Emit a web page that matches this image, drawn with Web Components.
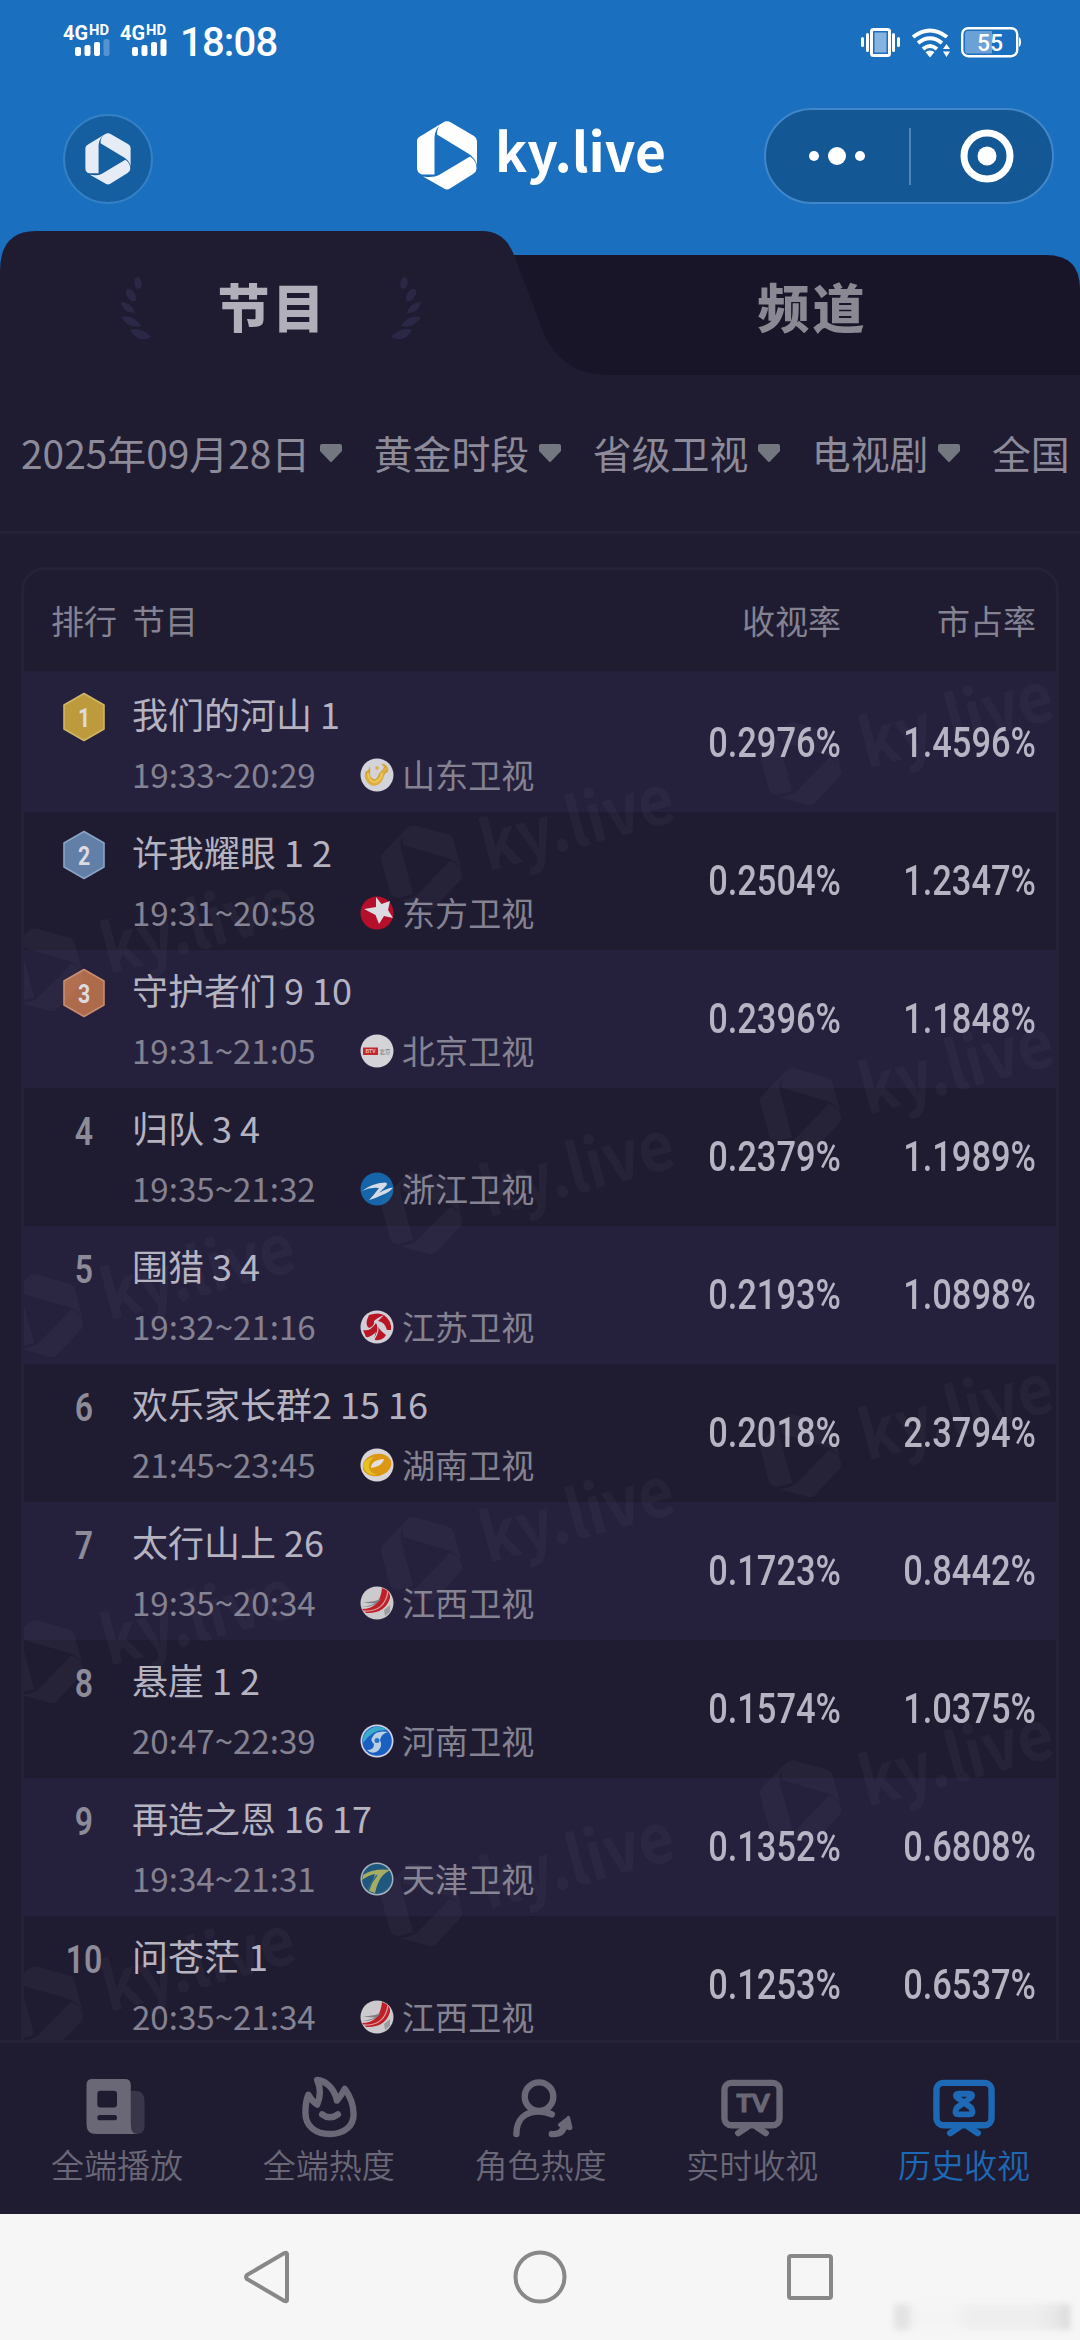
<!DOCTYPE html>
<html lang="zh-CN">
<head>
<meta charset="utf-8">
<title>ky.live</title>
<style>
  html, body {
    margin: 0;
    padding: 0;
  }
  body {
    width: 1080px;
    height: 2340px;
    overflow: hidden;
    background: #1f1c32;
    font-family: "Noto Sans CJK SC", sans-serif;
  }
</style>
</head>
<body>
<ky-app></ky-app>

<script>
const BRAND_MARK = `
  <path d="M0 20 Q0 17 3 15.500 L21 4.500 Q24 2.500 26 2 Q18 7 17.500 16 L17.500 53.500 L5 53.500 Q0 52 0 47 Z"/>
  <path d="M20 13.500 Q20 5 26 1.500 Q30 -1 34 1.500 L57 15 Q60 17 60 20 L60 44 Q58 37 52 33 Z"/>
  <path d="M53 35.500 Q60 40 59.500 48 Q59.300 51 56 53 L33 67.500 Q30 69.500 27 67.500 L6 55.500 Q17 57 22 54 Z"/>`;

const CHANNEL_ICONS = {
  shandong: `<circle cx="17" cy="17" r="16.500" fill="#d3d3da"/>
    <path d="M5 14 C6 25 11 29 16 27 C25 25 22 15 28 14 C29 8 24 5 21 6 C28 10 20 12 18 18 C17 23 10 22 10 15 Q11 10 9 8 Q10 12 5 14Z" fill="#d6a22c"/>
    <path d="M6 17 Q8 26 15 26 Q21 24 22 17 Q23 12 28 10" fill="none" stroke="#dcae43" stroke-width="3.500"/>
    <path d="M8 15 Q9 24 15 24 Q21 22 22 15" fill="none" stroke="#ecc85c" stroke-width="2"/>
    <circle cx="17" cy="10" r="1.800" fill="#dcae43"/>`,
  dongfang: `<circle cx="17" cy="17" r="16.500" fill="#b50f2b"/>
    <path d="M16 1 L21.500 8 L30 5 L28 14 L33 22 L24 20 L19 28 L15.500 19 L4 13 L16 11Z" fill="#dddbe2"/>`,
  beijing: `<circle cx="17" cy="17" r="16.500" fill="#d4d3d8"/>
    <rect x="3" y="13.500" width="15" height="7.500" fill="#c5262c"/>
    <text x="10.500" y="19.300" font-size="5" font-weight="bold" text-anchor="middle" fill="#e9c4c6" font-family="Liberation Sans, sans-serif">BTV</text>
    <text x="25" y="19.600" font-size="5.500" text-anchor="middle" fill="#66656d" font-family="Noto Sans CJK SC, sans-serif">北京</text>`,
  zhejiang: `<circle cx="17" cy="17" r="16.500" fill="#1565a8"/>
    <path d="M2 19 Q12 11 25 10.500 Q29 11 25 15 L19 21 Q27 16 33 15.500 Q30 20 22 23 Q14 27 9 28 Q14 23 19 16 Q10 15 2 19Z" fill="#d5dbe7"/>`,
  jiangsu: `<circle cx="17" cy="17" r="16.500" fill="#d2ced6"/>
    <path d="M9 5 Q18 2 24 5 Q17 8 14 11 Q15 16 9 18 Q4 15 9 5Z M24 5 Q32 11 31 20 L27 20 Q25 12 18 11Z M3 20 Q10 22 16 13 Q19 20 26 25 Q23 31 15 30 Q14 27 16 22 Q10 28 6 27Z" fill="#b81624"/>
    <path d="M17 12 Q20 21 14 29 M17 12 Q22 16 27 22" stroke="#d2ced6" stroke-width="1.300" fill="none"/>`,
  hunan: `<circle cx="17" cy="17" r="16.500" fill="#d8d5d8"/>
    <ellipse cx="17" cy="17" rx="14.500" ry="11" transform="rotate(-14 17 17)" fill="#dc9713"/>
    <path d="M3 18 Q6 28 17 27 Q10 25 9 20 Q8 14 14 9 Q4 11 3 18Z" fill="#e4c320"/>
    <path d="M11 20 Q11 12 24 11 Q23 18 11 20Z" fill="#e4dfdc"/>`,
  jiangxi: `<circle cx="17" cy="17" r="16.500" fill="#cccacd"/>
    <path d="M22 2 Q31 5 30 12 Q25 28 6 27 L2 23 Q20 23 22 2Z" fill="#bf2028"/>
    <path d="M4 25 Q25 26 28 5" stroke="#dc9c9f" stroke-width="1.300" fill="none"/>
    <path d="M3 16 Q12 17 21 13 Q14 22 2 21 Q10 20 15 17 Q8 18 3 16Z" fill="#7d8086"/>
    <path d="M24 24 L30 19 L30 26 L25 30Z" fill="#9b9da2"/>`,
  henan: `<circle cx="17" cy="17" r="16.500" fill="#d0d2e4"/>
    <circle cx="17" cy="17" r="14.800" fill="#1a5fc2"/>
    <path d="M3 19 A14.800 14.800 0 0 1 27 6 Q12 5 3 19Z" fill="#39aacb"/>
    <path d="M12 14 Q15 6 28 8 Q21 10 20 16 Q23 22 18 27 Q12 31 7 26 Q14 26 14 20 Q10 16 12 14Z" fill="#b6cfe2"/>
    <circle cx="17" cy="16.500" r="2.500" fill="#2672c6"/>`,
  tianjin: `<circle cx="17" cy="17" r="16.500" fill="#a4b3bc"/>
    <circle cx="17" cy="17" r="15" fill="#20577f"/>
    <path d="M3 13 Q14 6 31 8 Q19 12 15 31 L9 29 Q13 19 15 12 Q9 13 2 18Z" fill="#a6ac62"/>
    <path d="M17 13 Q11 20 8 28" stroke="#2d6a87" stroke-width="1.500" fill="none"/>`
};

const NAV_ICONS = {
  play: `<path d="M47 14 H51 Q61 14 61 24 V50 Q61 58 52 58 H46Z" opacity=".35"/>
    <path fill-rule="evenodd" d="M8 2 H41 Q47 2 47 8 V48 Q47 58 54 58 H12 Q2 58 2 48 V8 Q2 2 8 2Z M16 14 Q13 14 13 17 V28 Q13 31 16 31 H30 Q33 31 33 28 V17 Q33 14 30 14Z M15.500 38.500 Q13 38.500 13 41.300 Q13 44 15.500 44 H30.500 Q33 44 33 41.300 Q33 38.500 30.500 38.500Z"/>`,
  fire: `<g fill="none" stroke="currentColor" stroke-width="6.500" stroke-linejoin="round" stroke-linecap="round">
      <path d="M21 3 C31 4 39 13 41 24 Q46 18 49 12 C55 20 58 29 58 38 C58 50 48 58 34 58 C19 58 9 50 9 36 C9 29 10 23 12 18 Q16 25 21 28 C25 19 24 10 21 3Z"/>
      <path d="M26 38 Q34 44 42 38"/>
    </g>`,
  role: `<g fill="none" stroke="currentColor" stroke-width="6.500" stroke-linejoin="round" stroke-linecap="round">
      <circle cx="32" cy="20" r="14.500"/>
      <path d="M9 58 C9 43 18 35 32 35 Q39 35 45 38 M45 58 Q56 59 58 49"/>
    </g>
    <path d="M60 41 Q62 38 63.500 41 L66 51 Q66 54 63 54 L53 51 Q50 49 52 47Z"/>`,
  tv: `<g fill="none" stroke="currentColor" stroke-width="6.500" stroke-linejoin="round" stroke-linecap="round">
      <rect x="5" y="6" width="56" height="43" rx="7"/>
      <path d="M19 57 L28 51 M47 57 L38 51"/>
    </g>
    <text x="34" y="35.500" font-size="25" font-weight="900" text-anchor="middle" textLength="34" lengthAdjust="spacingAndGlyphs" stroke="currentColor" stroke-width=".8" font-family="Lato, Inter, sans-serif">TV</text>`,
  history: `<g fill="none" stroke="currentColor" stroke-width="6.500" stroke-linejoin="round" stroke-linecap="round">
      <rect x="5" y="6" width="56" height="43" rx="7"/>
      <path d="M19 57 L28 51 M47 57 L38 51"/>
      <path stroke-width="6" d="M28 17 H38 Q43 17 40 21 L26 31 Q22 38 28 38 H38 Q44 38 40 31 L26 21 Q23 17 28 17Z"/>
    </g>`
};

const PROGRAMS = [
  ['我们的河山 1', '19:33~20:29', 'shandong', '山东卫视', '0.2976%', '1.4596%'],
  ['许我耀眼 1 2', '19:31~20:58', 'dongfang', '东方卫视', '0.2504%', '1.2347%'],
  ['守护者们 9 10', '19:31~21:05', 'beijing', '北京卫视', '0.2396%', '1.1848%'],
  ['归队 3 4', '19:35~21:32', 'zhejiang', '浙江卫视', '0.2379%', '1.1989%'],
  ['围猎 3 4', '19:32~21:16', 'jiangsu', '江苏卫视', '0.2193%', '1.0898%'],
  ['欢乐家长群2 15 16', '21:45~23:45', 'hunan', '湖南卫视', '0.2018%', '2.3794%'],
  ['太行山上 26', '19:35~20:34', 'jiangxi', '江西卫视', '0.1723%', '0.8442%'],
  ['悬崖 1 2', '20:47~22:39', 'henan', '河南卫视', '0.1574%', '1.0375%'],
  ['再造之恩 16 17', '19:34~21:31', 'tianjin', '天津卫视', '0.1352%', '0.6808%'],
  ['问苍茫 1', '20:35~21:34', 'jiangxi', '江西卫视', '0.1253%', '0.6537%']
];

// Small base class: each element only supplies its markup.
class KyElement extends HTMLElement {
  connectedCallback() {
    if (this.shadowRoot) return;
    this.attachShadow({ mode: 'open' });
    this.shadowRoot.innerHTML = this.render();
  }
}

class StatusBar extends KyElement {
  signal(last) {
    return `<svg width="47" height="34" viewBox="0 0 47 34" fill="#fff">
      <text x="0" y="15.500" font-size="20" font-weight="700" textLength="25" lengthAdjust="spacingAndGlyphs">4G</text>
      <text x="26" y="10.500" font-size="14" font-weight="700" textLength="20" lengthAdjust="spacingAndGlyphs">HD</text>
      <rect x="12" y="23" width="6" height="9" rx="2"/>
      <rect x="21.500" y="21" width="6" height="11" rx="2"/>
      <rect x="31" y="18" width="6" height="14" rx="2"/>
      <rect x="40.500" y="15" width="6" height="17" rx="2" opacity="${last}"/>
    </svg>`;
  }

  render() {
    return `
      <style>
        :host {
          display: flex;
          justify-content: space-between;
          height: 84px;
          padding: 24px 59px 0 63px;
          box-sizing: border-box;
          color: #fff;
          font-family: Roboto, sans-serif;
        }
        .side { display: flex; align-items: flex-start; gap: 10px; }
        .time { margin: -5px 0 0 3px; font-size: 40px; font-weight: 500; line-height: 48px; letter-spacing: -0.800px; }
        svg { display: block; overflow: visible; }
      </style>
      <div class="side">${this.signal(0.25)}${this.signal(1)}<span class="time">18:08</span></div>
      <div class="side">
        <svg width="40" height="36" viewBox="0 0 40 36" fill="#fff">
          <rect x="10.500" y="5.500" width="18" height="26" rx="2" fill="#1a6fbf" stroke="#fff" stroke-width="3"/>
          <rect x="13.500" y="8.500" width="12" height="20" fill="#86b3df"/>
          <rect x="5" y="9" width="3" height="19" rx="1.500"/><rect x="0" y="13" width="3" height="10" rx="1.500"/>
          <rect x="31" y="9" width="3" height="19" rx="1.500"/><rect x="36" y="13" width="3" height="10" rx="1.500"/>
        </svg>
        <svg width="40" height="36" viewBox="0 0 40 36" fill="none" stroke="#fff" stroke-width="4">
          <path d="M2 13 Q19 0 36 13"/><path d="M7 19 Q19 9.500 31 19"/><path d="M12 25 Q19 19 26 25"/>
          <path d="M14.500 28 Q19 25 23.500 28 L19 33.500Z M32 25 L35.500 20 L39 25Z M32 27.500 L35.500 33 L39 27.500Z" fill="#fff" stroke="none"/>
        </svg>
        <svg width="60" height="36" viewBox="0 0 60 36">
          <rect x="1.200" y="4.200" width="55" height="28" rx="6" fill="none" stroke="#fff" stroke-width="2.400"/>
          <path d="M31 7 V29.500 H7 Q4 29.500 4 26.500 V10 Q4 7 7 7Z" fill="#6ca1d8"/>
          <path d="M58 13 Q60 14 60 18 Q60 22 58 23Z" fill="#fff"/>
          <text x="29" y="26.500" font-size="23" font-weight="500" text-anchor="middle" fill="#fff">55</text>
        </svg>
      </div>`;
  }
}

class BrandMark extends KyElement {
  render() {
    return `
      <style>
        :host { display: block; width: 60px; height: 69px; }
        svg { display: block; width: 100%; height: 100%; fill: currentColor; }
      </style>
      <svg viewBox="0 0 60 69">${BRAND_MARK}</svg>`;
  }
}

class AppHeader extends KyElement {
  render() {
    return `
      <style>
        :host {
          display: grid;
          grid-template-columns: 1fr auto 1fr;
          align-items: center;
          height: 147px;
          padding: 24px 26px 27px 63px;
          box-sizing: border-box;
          color: #fff;
        }
        .avatar {
          display: flex;
          align-items: center;
          justify-content: center;
          width: 86px;
          height: 86px;
          margin-top: 6px;
          border: 2px solid #3480c5;
          border-radius: 50%;
          background: #155e9f;
        }
        .avatar ky-mark { width: 46px; height: 52px; color: #e5ecf6; }
        .brand { width: 249px; height: 96px; margin-left: -37px; overflow: visible; }
        .capsule {
          display: flex;
          align-items: center;
          justify-self: end;
          width: 286px;
          height: 92px;
          border: 2px solid #4186c8;
          border-radius: 48px;
          background: #145795;
        }
        .dots { display: flex; flex: 1; align-items: center; justify-content: center; gap: 9px; padding-right: 1px; }
        i { width: 10px; height: 10px; border-radius: 50%; background: #fff; }
        i.big { width: 18px; height: 18px; }
        .line { width: 2px; height: 57px; background: #4c86bb; }
        .target { display: flex; width: 141px; justify-content: center; padding-left: 2px; box-sizing: border-box; }
        .target svg { margin-left: 8px; }
      </style>
      <div class="avatar"><ky-mark></ky-mark></div>
      <svg class="brand" viewBox="0 0 249 96" fill="#fff">
        <g transform="translate(1 13)">${BRAND_MARK}</g>
        <text x="79" y="64" font-size="54" font-weight="700" font-family="Noto Sans CJK SC, sans-serif" textLength="171" lengthAdjust="spacingAndGlyphs">ky.live</text>
      </svg>
      <div class="capsule">
        <div class="dots"><i></i><i class="big"></i><i></i></div>
        <div class="line"></div>
        <div class="target">
          <svg width="54" height="54" viewBox="0 0 54 54"><circle cx="27" cy="27" r="23" fill="none" stroke="#fff" stroke-width="7"/><circle cx="27" cy="27" r="9.500" fill="#fff"/></svg>
        </div>
      </div>`;
  }
}

class TabStrip extends KyElement {
  laurel(flip) {
    return `<svg width="32" height="66" viewBox="0 0 32 66" fill="#2b2845" style="transform: scaleX(${flip})">
      <ellipse cx="17" cy="7" rx="3.500" ry="6" transform="rotate(-12 17 7)"/>
      <ellipse cx="10" cy="19" rx="4" ry="7" transform="rotate(-35 10 19)"/>
      <path d="M0 26 Q12 27 14 37 Q2 37 0 26Z"/>
      <path d="M0 41 Q13 38 20 50 Q7 53 0 41Z"/>
      <path d="M9 54 Q20 50 30 61 Q17 68 9 54Z"/>
    </svg>`;
  }

  render() {
    return `
      <style>
        :host { display: grid; position: relative; height: 144px; grid-template-columns: 1fr 1fr; background: #1a6fbf; }
        .shape { position: absolute; inset: 0; }
        .tab {
          display: flex;
          position: relative;
          align-items: flex-start;
          justify-content: center;
          padding: 38px 0 0 2px;
          gap: 64px;
          color: #8a8893;
          font-size: 52px;
          font-weight: 900;
          line-height: 74px;
          letter-spacing: 3px;
        }
        .tab span { margin-right: -3px; }
        .tab.on { color: #b1afb9; }
        .tab svg { margin-top: 7px; }
      </style>
      <svg class="shape" width="1080" height="144" viewBox="0 0 1080 144">
        <path d="M480 24 H1046 Q1080 24 1080 58 V144 H480Z" fill="#181529"/>
        <path d="M0 144 V40 Q0 0 36 0 H482 Q505 0 514 24 L537 84 C548 122 570 144 608 144Z" fill="#1f1c32"/>
      </svg>
      <div class="tab on">${this.laurel(1)}<span>节目</span>${this.laurel(-1)}</div>
      <div class="tab"><span>频道</span></div>`;
  }
}

class FilterItem extends KyElement {
  render() {
    return `
      <style>
        :host { display: flex; flex: none; align-items: center; gap: 10px; }
        svg { display: block; margin-top: 2px; }
      </style>
      <slot></slot>
      <svg width="22" height="20" viewBox="0 0 22 20"><path d="M2 1 H20 Q22 1 22 3 V8 L12 18.500 Q11 19.500 10 18.500 L0 8 V3 Q0 1 2 1Z" fill="#727780"/></svg>`;
  }
}

class FilterBar extends KyElement {
  render() {
    return `
      <style>
        :host {
          display: flex;
          align-items: center;
          gap: 31.500px;
          height: 159px;
          padding: 0 0 3px 21px;
          box-sizing: border-box;
          border-bottom: 3px solid #242139;
          overflow: hidden;
          color: #8d8a99;
          font-size: 38.880px;
          font-weight: 400;
          line-height: 56px;
          white-space: nowrap;
        }
      </style>
      <ky-filter>2025年09月28日</ky-filter>
      <ky-filter>黄金时段</ky-filter>
      <ky-filter>省级卫视</ky-filter>
      <ky-filter>电视剧</ky-filter>
      <ky-filter>全国</ky-filter>`;
  }
}

class RankBadge extends KyElement {
  render() {
    const rank = Number(this.getAttribute('rank'));
    const colors = [['#bd9b3d', '#d0b565'], ['#627fa8', '#8ba3c5'], ['#ae6b4c', '#c98b70']][rank - 1];
    const hexagon = colors ? `<path d="M22 1.500 L42 13 V37 L22 48.500 L2 37 V13Z" fill="${colors[0]}" stroke="${colors[1]}" stroke-width="1.600" stroke-linejoin="round"/>` : '';
    const size = colors ? 26 : 39;
    return `
      <style>
        :host { display: block; width: 44px; height: 50px; font-family: Roboto, sans-serif; }
        svg { display: block; overflow: visible; }
        text { font-weight: ${colors ? 700 : 600}; text-anchor: middle; fill: ${colors ? '#dddbe0' : '#8e8b99'}; }
      </style>
      <svg width="44" height="50" viewBox="0 0 44 50">${hexagon}<text transform="translate(22 ${colors ? 34.5 : 39}) scale(.82 1)" font-size="${size}">${rank}</text></svg>`;
  }
}

class ProgramRow extends KyElement {
  render() {
    const index = Number(this.getAttribute('index'));
    const [title, time, icon, channel, rating, share] = PROGRAMS[index];
    return `
      <style>
        :host {
          display: grid;
          grid-template-columns: 108px 1fr 240px 195px;
          height: 138px;
          padding-right: 20px;
          background: ${index % 2 ? '#1f1c32' : '#25213d'};
        }
        ky-rank { margin: 18px 0 0 38px; }
        .title { margin-top: 12px; color: #b6b3c1; font-size: 36px; line-height: 54px; font-weight: 400; white-space: pre; }
        .meta { display: flex; align-items: center; margin-top: 10px; color: #858292; font-size: 33.100px; line-height: 48px; font-weight: 400; }
        .meta span:first-child { width: 228px; }
        .meta svg { margin: 1px 8px 0 0; }
        .num { justify-self: end; align-self: center; color: #b6b4c3; font: 500 42px/50px Roboto, sans-serif; transform: scaleX(.82); transform-origin: right; }
      </style>
      <ky-rank rank="${index + 1}"></ky-rank>
      <div>
        <div class="title">${title}</div>
        <div class="meta"><span>${time}</span><svg width="34" height="34" viewBox="0 0 34 34">${CHANNEL_ICONS[icon]}</svg><span>${channel}</span></div>
      </div>
      <div class="num">${rating}</div>
      <div class="num">${share}</div>`;
  }
}

class WaterMark extends KyElement {
  render() {
    // Three columns climbing at 15 degrees, repeated every 346px.
    const starts = [[41, 403], [420, 300], [799, 197]];
    const marks = starts.flatMap(([x, y]) => [0, 1, 2, 3].map(i => `
      <g transform="translate(${x - 22} ${y - 3 + i * 346}) rotate(-15) scale(1.25)">
        <g transform="translate(-30 -34.500)">${BRAND_MARK}</g>
        <text x="50" y="17" font-size="54" font-weight="700" textLength="158" lengthAdjust="spacingAndGlyphs">ky.live</text>
      </g>`)).join('');
    return `
      <style>
        :host { display: block; position: absolute; inset: 0; pointer-events: none; }
        svg { display: block; overflow: visible; fill: #fff; opacity: .035; font-family: "Noto Sans CJK SC", sans-serif; }
      </style>
      <svg width="1034" height="1474" viewBox="0 0 1034 1474">${marks}</svg>`;
  }
}

class RankTable extends KyElement {
  render() {
    return `
      <style>
        :host { display: block; flex: 1; min-height: 0; padding: 33px 21px 0; overflow: hidden; }
        .card { position: relative; height: 1500px; border: 3px solid #242139; border-radius: 24px; overflow: hidden; }
        .head {
          display: grid;
          grid-template-columns: 81px 1fr 240px 195px;
          align-items: center;
          height: 104px;
          padding: 0 20px 2px 27px;
          box-sizing: border-box;
          border-bottom: 3px solid #25213d;
          color: #858292;
          font-size: 33px;
          font-weight: 400;
        }
        .head .end { text-align: right; }
      </style>
      <div class="card">
        <div class="head"><span>排行</span><span>节目</span><span class="end">收视率</span><span class="end">市占率</span></div>
        ${PROGRAMS.map((p, i) => `<ky-row index="${i}"></ky-row>`).join('')}
        <ky-watermark></ky-watermark>
      </div>`;
  }
}

class NavItem extends KyElement {
  render() {
    return `
      <style>
        :host { display: flex; flex-direction: column; align-items: center; gap: 2px; padding-top: 34px; color: #6a6777; font-size: 33px; line-height: 48px; font-weight: 350; }
        :host([active]) { color: #1d69b5; }
        svg { display: block; fill: currentColor; overflow: visible; }
      </style>
      <svg width="66" height="61" viewBox="0 0 66 62">${NAV_ICONS[this.getAttribute('icon')]}</svg>
      <slot></slot>`;
  }
}

class BottomNav extends KyElement {
  render() {
    return `
      <style>
        :host { display: grid; flex: none; grid-template-columns: repeat(5, 1fr); height: 174px; padding: 0 10px 0 11px; box-sizing: border-box; border-top: 3px solid #242139; background: #1f1c32; }
      </style>
      <ky-nav-item icon="play">全端播放</ky-nav-item>
      <ky-nav-item icon="fire">全端热度</ky-nav-item>
      <ky-nav-item icon="role">角色热度</ky-nav-item>
      <ky-nav-item icon="tv">实时收视</ky-nav-item>
      <ky-nav-item icon="history" active>历史收视</ky-nav-item>`;
  }
}

class SystemNav extends KyElement {
  render() {
    return `
      <style>
        :host { display: flex; flex: none; position: relative; align-items: center; justify-content: space-between; height: 126px; padding: 0 242px; box-sizing: border-box; background: #f6f6f6; }
        svg { display: block; fill: none; stroke: #888; stroke-width: 4; stroke-linejoin: round; }
        .smudge { position: absolute; right: 10px; bottom: 10px; width: 176px; height: 26px; filter: blur(3px); opacity: .8; background: linear-gradient(90deg, #dedede 0 12px, #f4f4f4 20px 60px, #ededed 75px 140px, #e2e2e2 165px, #cfcfcf); }
      </style>
      <svg width="56" height="56" viewBox="0 0 56 56"><path d="M45 5 V51 Q45 53 42.500 52 L5 30 Q3 28 5 26 L42.500 4 Q45 3 45 5Z"/></svg>
      <svg width="56" height="56" viewBox="0 0 56 56"><circle cx="28" cy="28" r="24.500"/></svg>
      <svg width="56" height="56" viewBox="0 0 56 56"><rect x="7" y="7" width="42" height="42" rx="2"/></svg>
      <div class="smudge"></div>`;
  }
}

class KyApp extends KyElement {
  render() {
    return `
      <style>
        :host { display: flex; flex-direction: column; width: 1080px; height: 2340px; overflow: hidden; }
        .top { background: #1a6fbf; }
      </style>
      <div class="top"><ky-status></ky-status><ky-header></ky-header></div>
      <ky-tabs></ky-tabs>
      <ky-filters></ky-filters>
      <ky-table></ky-table>
      <ky-nav></ky-nav>
      <ky-system-nav></ky-system-nav>`;
  }
}

customElements.define('ky-status', StatusBar);
customElements.define('ky-mark', BrandMark);
customElements.define('ky-header', AppHeader);
customElements.define('ky-tabs', TabStrip);
customElements.define('ky-filter', FilterItem);
customElements.define('ky-filters', FilterBar);
customElements.define('ky-rank', RankBadge);
customElements.define('ky-row', ProgramRow);
customElements.define('ky-watermark', WaterMark);
customElements.define('ky-table', RankTable);
customElements.define('ky-nav-item', NavItem);
customElements.define('ky-nav', BottomNav);
customElements.define('ky-system-nav', SystemNav);
customElements.define('ky-app', KyApp);
</script>
</body>
</html>
